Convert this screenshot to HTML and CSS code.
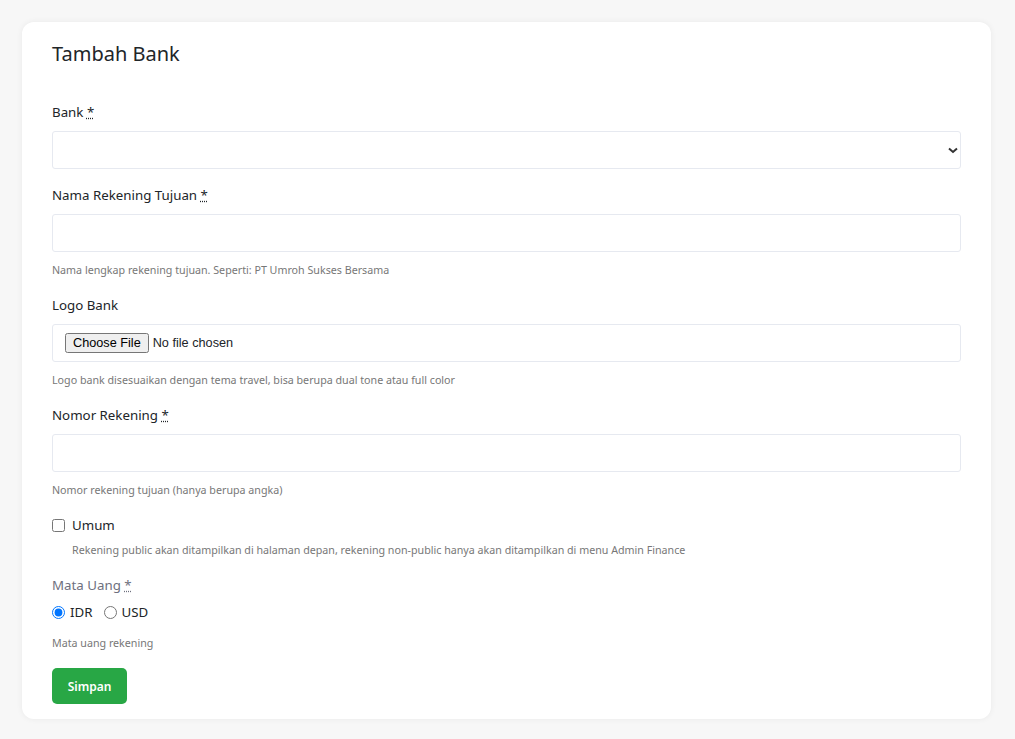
FILE: index.html
```html
<!DOCTYPE html>
<html lang="id">
<head>
  <meta charset="UTF-8">
  <meta name="viewport" content="width=device-width, initial-scale=1.0">
  <title>Tambah Bank</title>
  <link rel="stylesheet" href="styles.css">
</head>
<body>
  <div class="card">
    <h3 class="card-title">Tambah Bank</h3>
    <form class="form">
      <div class="form-group">
        <label class="form-label">Bank <abbr title="wajib">*</abbr></label>
        <div class="select-wrap">
          <select class="form-control"></select>
          <svg class="select-arrow" width="10" height="7" viewBox="0 0 10 7"><path d="M1 1.5l4 3.5 4-3.5" fill="none" stroke="#333" stroke-width="2"/></svg>
        </div>
      </div>

      <div class="form-group">
        <label class="form-label">Nama Rekening Tujuan <abbr title="wajib">*</abbr></label>
        <input type="text" class="form-control">
        <small class="help">Nama lengkap rekening tujuan. Seperti: PT Umroh Sukses Bersama</small>
      </div>

      <div class="form-group">
        <label class="form-label">Logo Bank</label>
        <div class="form-control file-box">
          <input type="file" class="file-input">
        </div>
        <small class="help">Logo bank disesuaikan dengan tema travel, bisa berupa dual tone atau full color</small>
      </div>

      <div class="form-group">
        <label class="form-label">Nomor Rekening <abbr title="wajib">*</abbr></label>
        <input type="text" class="form-control">
        <small class="help">Nomor rekening tujuan (hanya berupa angka)</small>
      </div>

      <div class="form-group form-check">
        <label class="check-label"><input type="checkbox" class="check-input"> Umum</label>
        <small class="help">Rekening public akan ditampilkan di halaman depan, rekening non-public hanya akan ditampilkan di menu Admin Finance</small>
      </div>

      <div class="form-group">
        <label class="form-label muted">Mata Uang <abbr title="wajib">*</abbr></label>
        <div class="radios">
          <label class="radio-label"><input type="radio" name="currency" checked> IDR</label>
          <label class="radio-label"><input type="radio" name="currency"> USD</label>
        </div>
        <small class="help">Mata uang rekening</small>
      </div>

      <button type="button" class="btn">Simpan</button>
    </form>
  </div>
</body>
</html>
```

FILE: styles.css
```css
body {
  font-family: "Noto Sans", Arial, sans-serif;
  font-size: 13.3px;
  color: #212529;
  background-color: #f7f7f7;
  margin: 0;
  padding: 22px 24px 20px 22px;
}

.card {
  background-color: #fff;
  border-radius: 12px;
  box-shadow: 0 0 6px rgba(0, 0, 0, 0.06);
  padding: 20px 30px 15px 30px;
}

.card-title {
  font-size: 20px;
  font-weight: 400;
  line-height: 24px;
  margin: 0 0 36px 0;
}

.form-group {
  margin-bottom: 16px;
}

.form-label {
  display: block;
  line-height: 21px;
  margin-bottom: 8px;
}

.form-label.muted {
  color: #6e707e;
  margin-bottom: 6px;
}

abbr {
  text-decoration: underline dotted;
  cursor: help;
}

.form-control {
  display: block;
  box-sizing: border-box;
  width: 100%;
  height: 38px;
  border: 1px solid #e6e9f0;
  border-radius: 3px;
  background: #fff;
  font-family: inherit;
  font-size: 14px;
  padding: 6px 12px;
  margin: 0;
}

.select-wrap {
  position: relative;
}

select.form-control {
  appearance: none;
}

.select-arrow {
  position: absolute;
  right: 3px;
  top: 16px;
}

.file-box {
  display: flex;
  align-items: center;
}

.file-input {
  font-family: Arial, sans-serif;
  font-size: 12.7px;
}

.help {
  display: block;
  font-size: 10.7px;
  color: #777;
  margin-top: 10px;
  line-height: 17px;
}

.form-check {
  padding-left: 20px;
}

.check-label {
  display: flex;
  align-items: center;
  margin-left: -20px;
  line-height: 21px;
}

.check-input {
  margin: 0 7px 0 0;
  width: 13px;
  height: 13px;
}

.form-check .help {
  margin-top: 6px;
}

.radios {
  display: flex;
  gap: 11px;
}

.radio-label {
  display: flex;
  align-items: center;
  line-height: 21px;
}

.radio-label input {
  margin: 0 5px 0 0;
  width: 13px;
  height: 13px;
}

.radios + .help {
  margin-top: 12px;
}

.btn {
  background-color: #28a745;
  color: #fff;
  border: none;
  border-radius: 5px;
  font-family: inherit;
  font-size: 12px;
  font-weight: 600;
  width: 75px;
  height: 36px;
  cursor: pointer;
}

.btn:hover {
  background-color: #218838;
}
```
